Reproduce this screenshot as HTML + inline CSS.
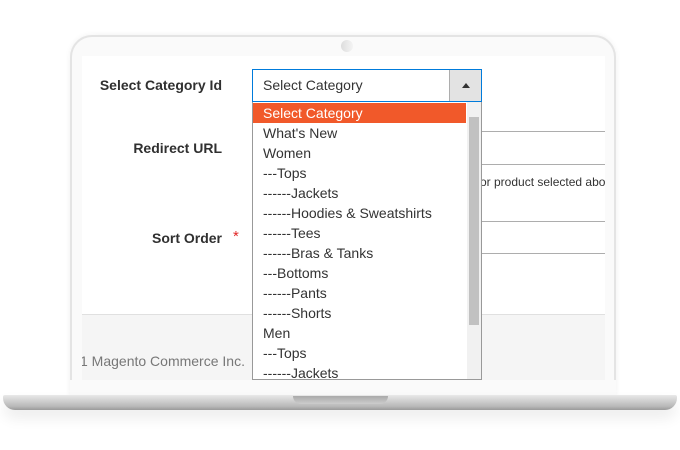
<!DOCTYPE html>
<html><head><style>
*{margin:0;padding:0;box-sizing:border-box}
body{width:680px;height:450px;background:#fff;position:relative;overflow:hidden;font-family:"Liberation Sans",sans-serif;color:#333}
.bezel{position:absolute;left:70px;top:35px;width:546px;height:362px;border:2px solid #e4e4e4;border-bottom:none;border-radius:22px 22px 0 0;background:#fafafa;box-shadow:0 0 6px rgba(0,0,0,.06)}
.cam{position:absolute;left:341px;top:40px;width:12px;height:12px;border-radius:50%;background:linear-gradient(90deg,#ddd,#f4f4f4)}
.screen{position:absolute;left:82px;top:56px;width:523px;height:324px;background:#fff;overflow:hidden}
.foot{position:absolute;left:0;top:258px;width:523px;height:66px;background:#f5f5f5;border-top:1px solid #e0e0e0}
.lbl{position:absolute;font-weight:bold;font-size:14px;color:#303030;text-align:right}
.line{position:absolute;left:400px;width:123px;height:1px;background:#adadad}
.base{position:absolute;left:3px;top:395px;width:674px;height:15px;border-radius:2px 2px 12px 12px;background:linear-gradient(#e9e9e9,#cfcfcf 40%,#b9b9b9 75%,#9a9a9a);box-shadow:0 8px 14px rgba(0,0,0,.08)}
.notch{position:absolute;left:293px;top:396px;width:95px;height:8px;border-radius:0 0 8px 8px;background:linear-gradient(#aaa,#ccc)}
.sel{position:absolute;left:252px;top:69px;width:230px;height:33px;border:1px solid #007bdb;background:#fff;font-size:14px;line-height:31px;padding-left:10px}
.btn{position:absolute;right:0;top:0;width:32px;height:31px;background:#e3e3e3;border-left:1px solid #adadad}
.btn:after{content:"";position:absolute;left:12px;top:13px;border:4px solid transparent;border-bottom:5px solid #333;border-top:none}
.list{position:absolute;left:252px;top:102px;width:230px;height:278px;background:#fff;border:1px solid #999;border-top:none;font-size:14px;overflow:hidden}
.it{height:20px;line-height:20px;padding-left:10px;width:213px;white-space:nowrap}
.on{background:#f1592a;color:#fff;margin-top:1px}
.sb{position:absolute;left:214px;top:0;width:14px;height:278px;background:#f1f1f1}
.th{position:absolute;left:2px;top:15px;width:10px;height:208px;background:#c1c1c1}
</style></head><body>
<div class="bezel"></div>
<div class="cam"></div>
<div class="screen">
 <div class="lbl" style="left:0;width:140px;top:21px">Select Category Id</div>
 <div class="lbl" style="left:0;width:140px;top:84px">Redirect URL</div>
 <div class="lbl" style="left:0;width:140px;top:174px">Sort Order</div>
 <div style="position:absolute;left:151px;top:172px;color:#e22626;font-size:15px">*</div>
 <div class="line" style="top:75px"></div>
 <div class="line" style="top:108px"></div>
 <div style="position:absolute;left:398px;top:119px;font-size:12px;color:#333;white-space:nowrap">or product selected abo</div>
 <div class="line" style="top:165px"></div>
 <div class="line" style="top:197px"></div>
 <div class="foot"><div style="position:absolute;left:-2px;top:38px;font-size:14px;color:#777">1 Magento Commerce Inc.</div></div>
</div>
<div class="sel">Select Category<div class="btn"></div></div>
<div class="list">
 <div class="it on">Select Category</div>
 <div class="it">What's New</div><div class="it">Women</div><div class="it">---Tops</div><div class="it">------Jackets</div>
 <div class="it">------Hoodies &amp; Sweatshirts</div><div class="it">------Tees</div><div class="it">------Bras &amp; Tanks</div>
 <div class="it">---Bottoms</div><div class="it">------Pants</div><div class="it">------Shorts</div><div class="it">Men</div><div class="it">---Tops</div><div class="it">------Jackets</div>
 <div class="sb"><div class="th"></div></div>
</div>
<div style="position:absolute;left:70px;top:380px;width:546px;height:16px;background:#fafafa"></div>
<div class="base"></div>
<div class="notch"></div>
</body></html>
